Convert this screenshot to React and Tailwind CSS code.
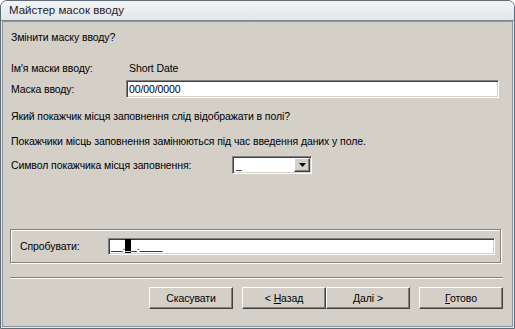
import React from 'react';

const font = "font-['Liberation_Sans','Arial',sans-serif]";

function Btn({ children, className = '' }) {
  return (
    <button
      className={`h-[22px] w-[84px] bg-[#d4d0c8] border border-t-white border-l-white border-r-[#404040] border-b-[#404040] shadow-[inset_-1px_-1px_0_#808080] text-[10.5px] text-black leading-none ${className}`}
    >
      {children}
    </button>
  );
}

const sunken =
  'bg-white border border-t-[#808080] border-l-[#808080] border-r-white border-b-white shadow-[inset_1px_1px_0_#404040,inset_-1px_-1px_0_#d4d0c8]';

export default function App() {
  return (
    <div className={`w-[515px] h-[329px] bg-white ${font}`}>
      <div className="w-[515px] h-[329px] border border-[#5f6b77] rounded-t-[7px] overflow-hidden flex flex-col bg-[#e4e7eb]">
        {/* title bar */}
        <div className="h-[20px] shrink-0 bg-gradient-to-b from-[#f3f4f6] to-[#e3e6ea] border-b border-[#7d8791] flex items-center pl-[8px]">
          <span className="text-[11.5px] text-[#1e1e1e] leading-none">Майстер масок вводу</span>
        </div>

        {/* body */}
        <div className="flex-1 px-[1px] pb-[1px] flex">
          <div className="flex-1 border border-[#8b939b] bg-[#d4d0c8] text-[10.5px] tracking-[-0.1px] leading-[14px] text-black flex flex-col px-[8px]">
            <div className="mt-[8px]">Змінити маску вводу?</div>

            <div className="mt-[17px] flex">
              <span className="w-[118px]">Ім'я маски вводу:</span>
              <span>Short Date</span>
            </div>

            <div className="mt-[5px] flex items-center">
              <span className="w-[115px]">Маска вводу:</span>
              <div className={`h-[18px] w-[373px] ${sunken} pl-[2px] flex items-center`}>
                <span>00/00/0000</span>
              </div>
            </div>

            <div className="mt-[11px]">Який покажчик місця заповнення слід відображати в полі?</div>
            <div className="mt-[11px]">Покажчики місць заповнення замінюються під час введення даних у поле.</div>

            <div className="mt-[8px] flex items-center">
              <span className="w-[221px]">Символ покажчика місця заповнення:</span>
              <div className={`h-[18px] w-[80px] ${sunken} flex items-stretch p-[1px]`}>
                <span className="flex-1 pl-[2px] leading-[14px]">_</span>
                <div className="w-[16px] bg-[#d4d0c8] border border-t-white border-l-white border-r-[#404040] border-b-[#404040] shadow-[inset_-1px_-1px_0_#808080] flex items-center justify-center">
                  <svg width="7" height="4" viewBox="0 0 7 4"><path d="M0 0h7L3.5 4z" fill="#000" /></svg>
                </div>
              </div>
            </div>

            {/* try group */}
            <div className="mt-[55px] ml-[-1px] mr-[3px] h-[34px] border border-[#808080] shadow-[inset_1px_1px_0_white,1px_1px_0_white] flex items-center pl-[9px] pr-[5px]">
              <span className="w-[88px]">Спробувати:</span>
              <div className={`flex-1 h-[17px] ${sunken} pl-[2px] flex items-center`}>
                <span className="whitespace-pre">__.</span>
                <span className="bg-black text-white whitespace-pre">_</span>
                <span className="whitespace-pre">_.____</span>
              </div>
            </div>

            {/* separator */}
            <div className="mt-[14px] ml-[-1px] mr-[1px] h-[2px] border-t border-[#808080] border-b border-b-white" />

            {/* buttons */}
            <div className="mt-[8px] flex justify-end pr-[1px]">
              <Btn>Скасувати</Btn>
              <Btn className="ml-[9px] w-[82px]">&lt; <u>Н</u>азад</Btn>
              <Btn className="w-[82px]"><u>Д</u>алі &gt;</Btn>
              <Btn className="ml-[9px] w-[81px]"><u>Г</u>отово</Btn>
            </div>
          </div>
        </div>
      </div>
    </div>
  );
}
